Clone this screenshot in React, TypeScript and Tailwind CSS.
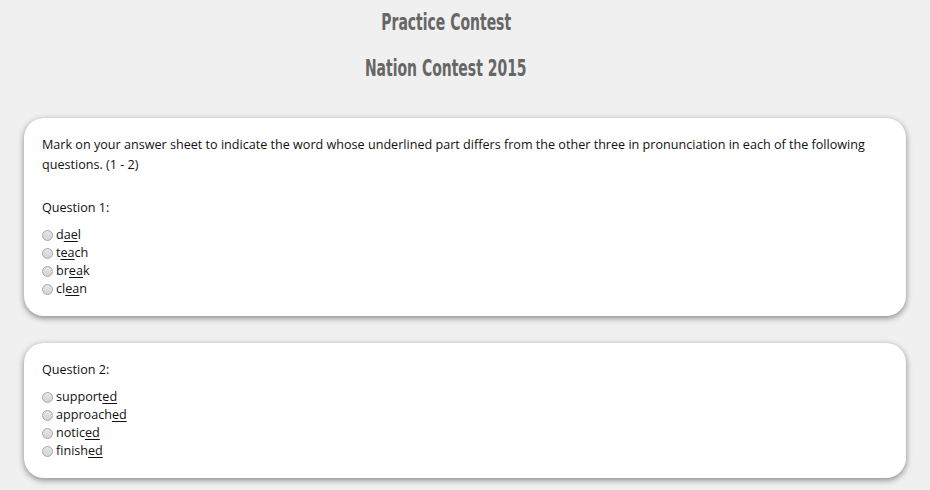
import React from "react";

type Option = { pre: string; mark: string; post: string };

const questions: { id: number; options: Option[] }[] = [
  {
    id: 1,
    options: [
      { pre: "d", mark: "ae", post: "l" },
      { pre: "t", mark: "ea", post: "ch" },
      { pre: "br", mark: "ea", post: "k" },
      { pre: "cl", mark: "ea", post: "n" },
    ],
  },
  {
    id: 2,
    options: [
      { pre: "support", mark: "ed", post: "" },
      { pre: "approach", mark: "ed", post: "" },
      { pre: "notic", mark: "ed", post: "" },
      { pre: "finish", mark: "ed", post: "" },
    ],
  },
];

const Radio = () => (
  <span className="inline-block w-[11px] h-[11px] rounded-full border border-[#a9a9a9] bg-gradient-to-b from-[#e6e6e6] to-[#d4d4d4] mr-[3px] shrink-0" />
);

const Question = ({ id, options }: { id: number; options: Option[] }) => (
  <div>
    <p className="leading-[20px]">Question {id}:</p>
    <ul className="mt-[8px]">
      {options.map((o, i) => (
        <li key={i} className="flex items-center leading-[18px]">
          <Radio />
          <span>
            {o.pre}
            <span className="underline underline-offset-2">{o.mark}</span>
            {o.post}
          </span>
        </li>
      ))}
    </ul>
  </div>
);

const Card = ({ children }: { children: React.ReactNode }) => (
  <div className="bg-white rounded-[20px] shadow-[0_2px_6px_rgba(0,0,0,0.45)] pl-[18px] pr-[20px] pt-[17px] pb-[18px]">
    {children}
  </div>
);

// condensed heading (Oswald-like)
const Heading = ({ children }: { children: React.ReactNode }) => (
  <div className="flex justify-center">
    <span className="inline-block scale-x-[0.675] whitespace-nowrap">{children}</span>
  </div>
);

export default function App() {
  return (
    <div
      className="min-h-screen bg-[#f0f0f0] text-[12.6px] text-[#111] px-[24px] pb-[20px]"
      style={{ fontFamily: '"Open Sans", "Noto Sans", sans-serif' }}
    >
      <header
        className="text-[#666666] font-bold text-[23px] leading-[26px] pt-[9px] pr-[38px]"
        style={{ fontFamily: '"DejaVu Sans Condensed", "Liberation Sans Narrow", sans-serif' }}
      >
        <Heading>Practice Contest</Heading>
        <div className="mt-[20px]">
          <Heading>Nation Contest 2015</Heading>
        </div>
      </header>

      <div className="mt-[37px] flex flex-col gap-[27px]">
        <Card>
          <p className="leading-[20px]">
            Mark on your answer sheet to indicate the word whose underlined part differs from the other three in
            pronunciation in each of the following questions. (1 - 2)
          </p>
          <div className="mt-[23px]">
            <Question {...questions[0]} />
          </div>
        </Card>
        <Card>
          <Question {...questions[1]} />
        </Card>
      </div>
    </div>
  );
}
